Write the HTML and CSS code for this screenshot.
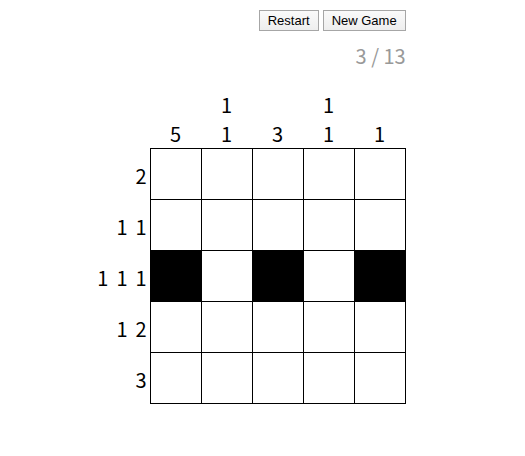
FILE: index.html
```html
<!DOCTYPE html>
<html lang="en">
<head>
<meta charset="utf-8">
<title>Nonogram</title>
<link rel="stylesheet" href="styles.css">
</head>
<body>
<main class="game">
  <div class="toolbar">
    <button class="action" type="button">Restart</button>
    <button class="action" type="button">New Game</button>
  </div>
  <p class="progress">3 / 13</p>
  <table class="board">
    <thead>
      <tr>
        <td></td>
        <th class="top" scope="col"><div>5</div></th>
        <th class="top" scope="col"><div>1</div><div>1</div></th>
        <th class="top" scope="col"><div>3</div></th>
        <th class="top" scope="col"><div>1</div><div>1</div></th>
        <th class="top" scope="col"><div>1</div></th>
      </tr>
    </thead>
    <tbody>
      <tr>
        <th class="side" scope="row"><div class="clues"><span>2</span></div></th>
        <td class="cell"></td><td class="cell"></td><td class="cell"></td><td class="cell"></td><td class="cell"></td>
      </tr>
      <tr>
        <th class="side" scope="row"><div class="clues"><span>1</span><span>1</span></div></th>
        <td class="cell"></td><td class="cell"></td><td class="cell"></td><td class="cell"></td><td class="cell"></td>
      </tr>
      <tr>
        <th class="side" scope="row"><div class="clues"><span>1</span><span>1</span><span>1</span></div></th>
        <td class="cell filled"></td><td class="cell"></td><td class="cell filled"></td><td class="cell"></td><td class="cell filled"></td>
      </tr>
      <tr>
        <th class="side" scope="row"><div class="clues"><span>1</span><span>2</span></div></th>
        <td class="cell"></td><td class="cell"></td><td class="cell"></td><td class="cell"></td><td class="cell"></td>
      </tr>
      <tr>
        <th class="side" scope="row"><div class="clues"><span>3</span></div></th>
        <td class="cell"></td><td class="cell"></td><td class="cell"></td><td class="cell"></td><td class="cell"></td>
      </tr>
    </tbody>
  </table>
</main>
</body>
</html>
```

FILE: styles.css
```css
body {
  margin: 0;
  padding: 10px 22px 10px 0;
  background: #fff;
  color: #000;
  font-family: "Noto Sans CJK JP", "Noto Sans", sans-serif;
  font-size: 20px;
  line-height: 29px;
}

.game {
  width: fit-content;
  margin: 0 auto;
}

.toolbar {
  display: flex;
  justify-content: flex-end;
  gap: 4px;
}

.action {
  padding: 2px 8px;
  border: 1px solid #a6a6a6;
  border-radius: 0;
  background: linear-gradient(#fafafa, #eeeeee);
  color: #000;
  font: 13px/15px "Liberation Sans", Arial, sans-serif;
}

.progress {
  margin: 10px 0 20px;
  color: #999;
  text-align: right;
}

.board {
  border-collapse: collapse;
}

.board th,
.board td {
  padding: 0;
  font-weight: 400;
}

.board .top {
  text-align: center;
  vertical-align: bottom;
}

.board .side {
  padding: 2px 3px 0 0;
}

.clues {
  display: flex;
  justify-content: flex-end;
  gap: 8px;
}

.board .cell {
  width: 50px;
  height: 50px;
  border: 1px solid #000;
}

.board .filled {
  background: #000;
}
```
